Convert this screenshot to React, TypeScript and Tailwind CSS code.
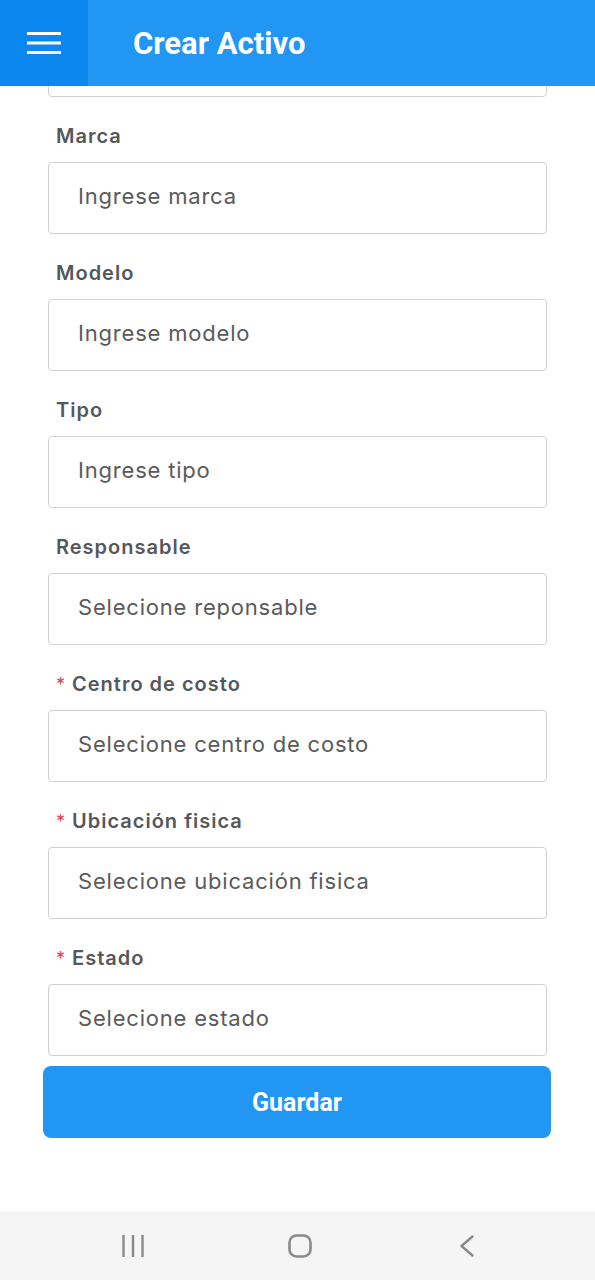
const fields = [
  { label: 'Marca', placeholder: 'Ingrese marca', required: false },
  { label: 'Modelo', placeholder: 'Ingrese modelo', required: false },
  { label: 'Tipo', placeholder: 'Ingrese tipo', required: false },
  { label: 'Responsable', placeholder: 'Selecione reponsable', required: false },
  { label: 'Centro de costo', placeholder: 'Selecione centro de costo', required: true },
  { label: 'Ubicación fisica', placeholder: 'Selecione ubicación fisica', required: true },
  { label: 'Estado', placeholder: 'Selecione estado', required: true },
];

function MenuIcon() {
  return (
    <svg width="34" height="22" viewBox="0 0 34 22" fill="white">
      <rect x="0" y="0" width="34" height="3" />
      <rect x="0" y="9.5" width="34" height="3" />
      <rect x="0" y="19" width="34" height="3" />
    </svg>
  );
}

function Field({ label, placeholder, required }: { label: string; placeholder: string; required: boolean }) {
  return (
    <div className="mt-[26px]">
      <div className="flex h-[26px] items-baseline pl-[8px] text-[20px] font-semibold leading-[26px] tracking-[1px] text-[#54585c]">
        {required && <span className="mr-[7px] text-[18px] font-normal tracking-normal text-[#d9434f]">*</span>}
        {label}
      </div>
      <div className="mt-[13px] flex h-[72px] items-center rounded-[4px] border border-[#d0d0d0] bg-white pb-[3px] pl-[29px] text-[22px] tracking-[0.8px] text-[#5a5a5a]">
        {placeholder}
      </div>
    </div>
  );
}

export default function App() {
  return (
    <div className="flex h-screen flex-col overflow-hidden bg-white font-['Inter',sans-serif]">
      <header className="flex h-[86px] shrink-0 items-stretch bg-[#2196f3]">
        <div className="flex w-[88px] items-center justify-center bg-[#0d87f0]">
          <MenuIcon />
        </div>
        <h1 className="ml-[45px] flex items-center pt-[2px] font-['Roboto',sans-serif] text-[31px] font-bold text-white">
          Crear Activo
        </h1>
      </header>

      <main className="flex-1 overflow-hidden px-[48px]">
        <div className="-mt-[61px] h-[72px] rounded-[4px] border border-[#d0d0d0]" />
        {fields.map((f) => (
          <Field key={f.label} {...f} />
        ))}
        <button className="-mx-[5px] mt-[10px] flex h-[72px] w-[calc(100%+9px)] items-center justify-center rounded-[8px] bg-[#2196f3] pt-[2px] font-['Roboto',sans-serif] text-[25px] font-bold text-white">
          Guardar
        </button>
      </main>

      <nav className="grid h-[69px] shrink-0 grid-cols-3 items-center bg-[#f5f5f5] pl-[49px] pr-[45px]">
        <div className="flex justify-center">
          <svg width="22" height="22" viewBox="0 0 22 22" stroke="#8a8a8a" strokeWidth="2.4">
            <line x1="1.5" y1="0" x2="1.5" y2="22" />
            <line x1="11" y1="0" x2="11" y2="22" />
            <line x1="20.5" y1="0" x2="20.5" y2="22" />
          </svg>
        </div>
        <div className="flex justify-center">
          <svg width="24" height="24" viewBox="0 0 24 24" fill="none" stroke="#8a8a8a" strokeWidth="2.6">
            <rect x="1.5" y="1.5" width="21" height="21" rx="7" />
          </svg>
        </div>
        <div className="flex justify-center">
          <svg width="14" height="22" viewBox="0 0 14 22" fill="none" stroke="#8a8a8a" strokeWidth="2.4" strokeLinecap="round" strokeLinejoin="round">
            <polyline points="12.5,1.5 1.5,11 12.5,20.5" />
          </svg>
        </div>
      </nav>
    </div>
  );
}
